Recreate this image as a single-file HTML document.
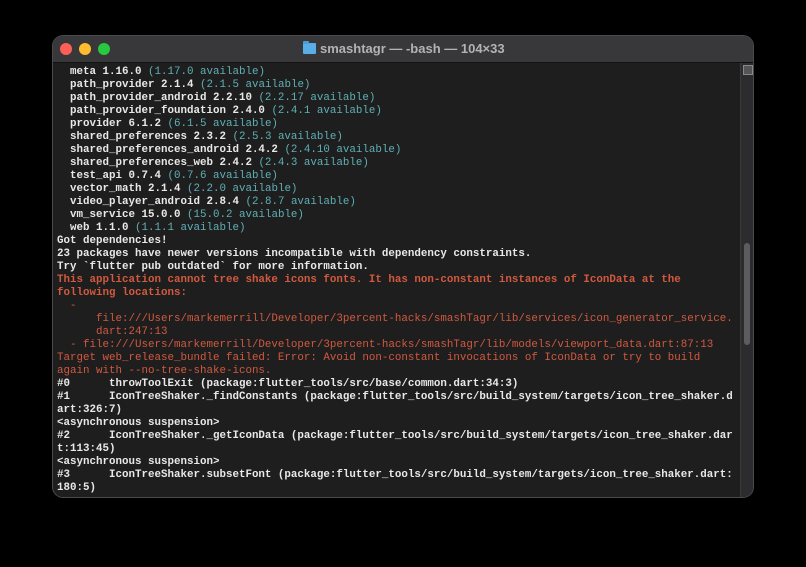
<!DOCTYPE html>
<html><head><meta charset="utf-8"><style>
html,body{margin:0;padding:0;background:#000;width:806px;height:567px;overflow:hidden}
.win{position:absolute;left:53px;top:36px;width:700px;height:461px;background:#1e1e1e;border-radius:10px;overflow:hidden;box-shadow:0 0 0 1px #4a4a4c}
.tb{position:absolute;left:0;top:0;width:700px;height:26px;background:#38383a;border-bottom:1px solid #111}
.dot{position:absolute;top:7px;width:12px;height:12px;border-radius:50%}
.title{position:absolute;left:267px;top:5px;font:bold 13px "Liberation Sans",sans-serif;color:#b3b3b3;white-space:nowrap}
.folder{position:absolute;left:250px;top:7px;width:13px;height:11px;background:#5aaee8;border-radius:1px}
.folder:before{content:"";position:absolute;left:0;top:-2px;width:6px;height:3px;background:#4a9bd6;border-radius:1px 1px 0 0}
.sb{position:absolute;left:687px;top:27px;width:13px;height:434px;background:#2c2c2e;border-left:1px solid #3a3a3a}
.thumb{position:absolute;left:3px;top:180px;width:6px;height:102px;background:#5c5c5e;border-radius:3px}
.ic{position:absolute;left:2px;top:2px;width:8px;height:8px;border:1px solid #888;background:#555}
pre{position:absolute;left:4px;top:30px;margin:0;font:bold 10.83px/13px "Liberation Mono",monospace;color:#e8e8e8;white-space:pre}
.c{color:#5fb0b6;font-weight:normal}
.r{color:#d2593f}
</style></head><body>
<div class="win">
<div class="tb">
<div class="dot" style="left:7px;background:#fe5f57"></div>
<div class="dot" style="left:26px;background:#febc2e"></div>
<div class="dot" style="left:45px;background:#28c840"></div>
<div class="folder"></div>
<div class="title">smashtagr — -bash — 104×33</div>
</div>
<div class="sb"><div class="ic"></div><div class="thumb"></div></div>
<pre>  meta 1.16.0 <span class="c">(1.17.0 available)</span>
  path_provider 2.1.4 <span class="c">(2.1.5 available)</span>
  path_provider_android 2.2.10 <span class="c">(2.2.17 available)</span>
  path_provider_foundation 2.4.0 <span class="c">(2.4.1 available)</span>
  provider 6.1.2 <span class="c">(6.1.5 available)</span>
  shared_preferences 2.3.2 <span class="c">(2.5.3 available)</span>
  shared_preferences_android 2.4.2 <span class="c">(2.4.10 available)</span>
  shared_preferences_web 2.4.2 <span class="c">(2.4.3 available)</span>
  test_api 0.7.4 <span class="c">(0.7.6 available)</span>
  vector_math 2.1.4 <span class="c">(2.2.0 available)</span>
  video_player_android 2.8.4 <span class="c">(2.8.7 available)</span>
  vm_service 15.0.0 <span class="c">(15.0.2 available)</span>
  web 1.1.0 <span class="c">(1.1.1 available)</span>
Got dependencies!
23 packages have newer versions incompatible with dependency constraints.
Try `flutter pub outdated` for more information.
<span class="r">This application cannot tree shake icons fonts. It has non-constant instances of IconData at the
following locations:</span>
<span class="r" style="font-weight:normal">  -
      file:///Users/markemerrill/Developer/3percent-hacks/smashTagr/lib/services/icon_generator_service.
      dart:247:13
  - file:///Users/markemerrill/Developer/3percent-hacks/smashTagr/lib/models/viewport_data.dart:87:13
Target web_release_bundle failed: Error: Avoid non-constant invocations of IconData or try to build
again with --no-tree-shake-icons.</span>
#0      throwToolExit (package:flutter_tools/src/base/common.dart:34:3)
#1      IconTreeShaker._findConstants (package:flutter_tools/src/build_system/targets/icon_tree_shaker.d
art:326:7)
&lt;asynchronous suspension&gt;
#2      IconTreeShaker._getIconData (package:flutter_tools/src/build_system/targets/icon_tree_shaker.dar
t:113:45)
&lt;asynchronous suspension&gt;
#3      IconTreeShaker.subsetFont (package:flutter_tools/src/build_system/targets/icon_tree_shaker.dart:
180:5)</pre>
</div>
</body></html>
